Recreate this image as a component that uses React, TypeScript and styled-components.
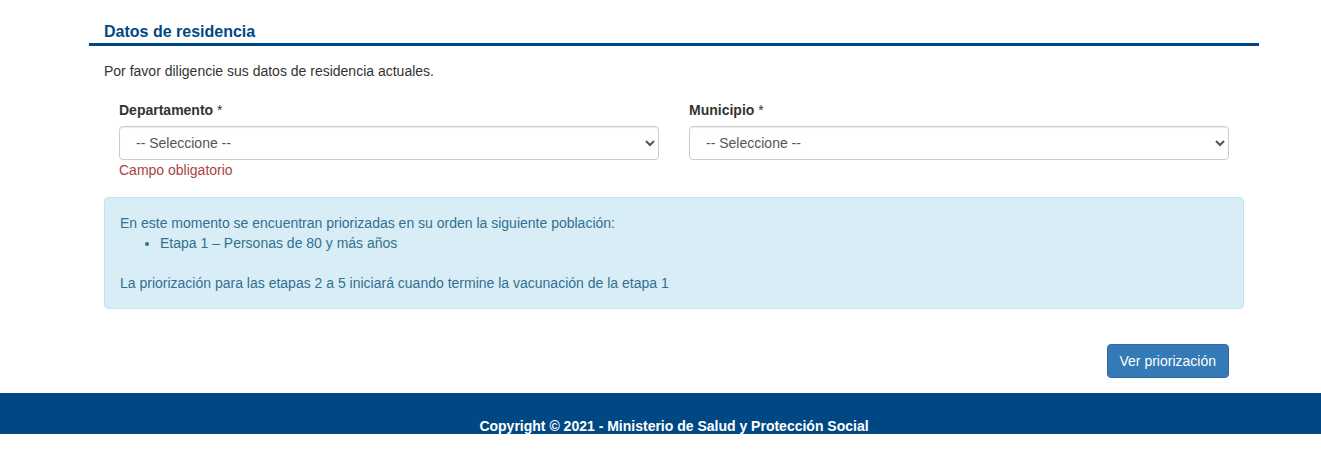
import React from 'react';
import styled, { createGlobalStyle } from 'styled-components';

const GlobalStyle = createGlobalStyle`
  html, body {
    margin: 0;
    padding: 0;
    background: #fff;
  }
  body {
    font-family: "Liberation Sans", Arial, sans-serif;
    font-size: 14px;
    line-height: 20px;
    color: #333;
  }
  * {
    box-sizing: border-box;
  }
`;

const Container = styled.div`
  width: 1170px;
  margin-left: 89px;
`;

const Section = styled.section`
  padding-top: 22px;
`;

const SectionTitle = styled.h3`
  margin: 0;
  padding: 0 15px 1px;
  font-size: 16px;
  line-height: 20px;
  font-weight: bold;
  color: #004884;
  border-bottom: 3px solid #004884;
`;

const Body = styled.div`
  padding: 0 15px;
`;

const Intro = styled.p`
  margin: 15px 0 19px;
`;

const Row = styled.div`
  display: flex;
`;

const Col = styled.div`
  flex: 0 0 50%;
  padding: 0 15px;
`;

const Label = styled.label`
  display: block;
  font-weight: bold;
  margin-bottom: 6px;

  span {
    font-weight: normal;
  }
`;

const Select = styled.select`
  display: block;
  width: 100%;
  height: 34px;
  padding: 6px 12px;
  font-family: inherit;
  font-size: 14px;
  color: #555;
  background: #fff;
  border: 1px solid #ccc;
  border-radius: 4px;
  box-shadow: inset 0 1px 1px rgba(0, 0, 0, 0.075);
`;

const HelpError = styled.div`
  color: #a94442;
`;

const Alert = styled.div`
  margin-top: 17px;
  padding: 15px;
  background: #d9edf7;
  border: 1px solid #bce8f1;
  border-radius: 4px;
  color: #31708f;

  ul {
    margin: 0;
    padding-left: 40px;
  }
`;

const AlertText = styled.p<{ $gap?: boolean }>`
  margin: ${props => (props.$gap ? '20px 0 0' : '0')};
`;

const Actions = styled.div`
  display: flex;
  justify-content: flex-end;
  padding: 35px 30px 15px;
`;

const Button = styled.button`
  height: 34px;
  padding: 6px 12px;
  font-family: inherit;
  font-size: 14px;
  color: #fff;
  background: #337ab7;
  border: 1px solid #2e6da4;
  border-radius: 4px;
  cursor: pointer;
`;

const Footer = styled.footer`
  background: #004884;
  height: 41px;
  overflow: hidden;
`;

const FooterText = styled.div`
  width: 1170px;
  margin-left: 89px;
  padding-top: 23px;
  text-align: center;
  color: #fff;
  font-weight: bold;
  font-size: 14px;
  line-height: 20px;
`;

export default function App() {
  return (
    <>
      <GlobalStyle />
      <Container>
        <Section>
          <SectionTitle>Datos de residencia</SectionTitle>
          <Body>
            <Intro>Por favor diligencie sus datos de residencia actuales.</Intro>
            <Row>
              <Col>
                <Label>
                  Departamento <span>*</span>
                </Label>
                <Select defaultValue="">
                  <option value="">-- Seleccione --</option>
                </Select>
                <HelpError>Campo obligatorio</HelpError>
              </Col>
              <Col>
                <Label>
                  Municipio <span>*</span>
                </Label>
                <Select defaultValue="">
                  <option value="">-- Seleccione --</option>
                </Select>
              </Col>
            </Row>
            <Alert>
              <AlertText>En este momento se encuentran priorizadas en su orden la siguiente población:</AlertText>
              <ul>
                <li>Etapa 1 – Personas de 80 y más años</li>
              </ul>
              <AlertText $gap>
                La priorización para las etapas 2 a 5 iniciará cuando termine la vacunación de la etapa 1
              </AlertText>
            </Alert>
          </Body>
          <Actions>
            <Button>Ver priorización</Button>
          </Actions>
        </Section>
      </Container>
      <Footer>
        <FooterText>Copyright © 2021 - Ministerio de Salud y Protección Social</FooterText>
      </Footer>
    </>
  );
}
